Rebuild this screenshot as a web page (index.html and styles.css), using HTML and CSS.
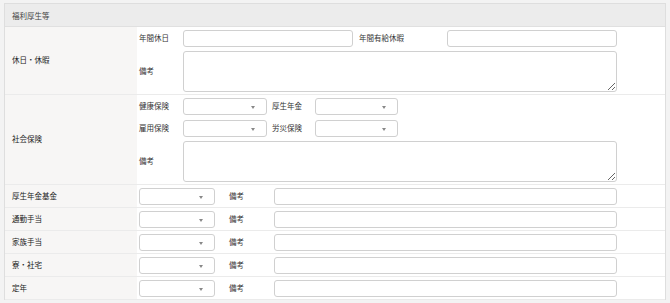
FILE: index.html
```html
<!DOCTYPE html>
<html lang="ja">
<head>
    <meta charset="UTF-8">
    <meta name="viewport" content="width=device-width, initial-scale=1.0">
    <title>福利厚生等</title>
    <link rel="stylesheet" href="styles.css">
</head>
<body>
    <div class="panel">
        <div class="panel-head">福利厚生等</div>

        <div class="row">
            <div class="row-label">休日・休暇</div>
            <div class="row-body">
                <div class="line">
                    <span class="fl">年間休日</span>
                    <input type="text" class="inp w170">
                    <span class="fl fl-wide">年間有給休暇</span>
                    <input type="text" class="inp w170">
                </div>
                <div class="line">
                    <span class="fl">備考</span>
                    <textarea class="memo"></textarea>
                </div>
            </div>
        </div>

        <div class="row">
            <div class="row-label">社会保険</div>
            <div class="row-body">
                <div class="line">
                    <span class="fl">健康保険</span>
                    <div class="sel w84"></div>
                    <span class="fl fl-mid">厚生年金</span>
                    <div class="sel w83"></div>
                </div>
                <div class="line gap5">
                    <span class="fl">雇用保険</span>
                    <div class="sel w84"></div>
                    <span class="fl fl-mid">労災保険</span>
                    <div class="sel w83"></div>
                </div>
                <div class="line">
                    <span class="fl">備考</span>
                    <textarea class="memo"></textarea>
                </div>
            </div>
        </div>

        <div class="row">
            <div class="row-label">厚生年金基金</div>
            <div class="row-body">
                <div class="line">
                    <div class="sel w76"></div>
                    <span class="fl fl-note">備考</span>
                    <input type="text" class="inp w343">
                </div>
            </div>
        </div>

        <div class="row">
            <div class="row-label">通勤手当</div>
            <div class="row-body">
                <div class="line">
                    <div class="sel w76"></div>
                    <span class="fl fl-note">備考</span>
                    <input type="text" class="inp w343">
                </div>
            </div>
        </div>

        <div class="row">
            <div class="row-label">家族手当</div>
            <div class="row-body">
                <div class="line">
                    <div class="sel w76"></div>
                    <span class="fl fl-note">備考</span>
                    <input type="text" class="inp w343">
                </div>
            </div>
        </div>

        <div class="row">
            <div class="row-label">寮・社宅</div>
            <div class="row-body">
                <div class="line">
                    <div class="sel w76"></div>
                    <span class="fl fl-note">備考</span>
                    <input type="text" class="inp w343">
                </div>
            </div>
        </div>

        <div class="row">
            <div class="row-label">定年</div>
            <div class="row-body">
                <div class="line">
                    <div class="sel w76"></div>
                    <span class="fl fl-note">備考</span>
                    <input type="text" class="inp w343">
                </div>
            </div>
        </div>
    </div>
</body>
</html>
```

FILE: styles.css
```css
*,
*::after,
*::before{
    padding: 0;
    margin: 0;
    box-sizing: border-box;
}
html{
    font: normal 7.5px/1.4 "Noto Sans CJK JP", "Noto Sans", sans-serif;
}
body{
    background-color: #f3f3f3;
    padding: 3px 4px 0 4px;
    color: #333;
}
.panel{
    background-color: #fff;
    border: 1px solid #dedede;
    border-bottom: none;
}
.panel-head{
    height: 23px;
    line-height: 23px;
    padding-left: 7px;
    background-color: #ececec;
    border-bottom: 1px solid #e0e0e0;
    color: #444;
}
.row{
    display: grid;
    grid-template-columns: 132px 1fr;
    border-bottom: 1px solid #ebebeb;
}
.row-label{
    background-color: #f7f6f5;
    padding-left: 7px;
    display: flex;
    align-items: center;
    color: #222;
}
.row-body{
    padding: 3px 0 2px 2px;
}
.line{
    display: flex;
    align-items: center;
}
.line + .line{
    margin-top: 4px;
}
.line.gap5{
    margin-top: 5px;
}
.fl{
    width: 44px;
    flex-shrink: 0;
    color: #333;
}
.fl-wide{
    width: 88px;
    margin-left: 6px;
}
.fl-mid{
    width: 43px;
    margin-left: 5px;
}
.fl-note{
    width: 45px;
    margin-left: 14px;
}
.inp{
    height: 17px;
    border: 1px solid #d0d0d0;
    border-radius: 3px;
    background-color: #fff;
    font: inherit;
}
.w170{ width: 170px; }
.w343{ width: 343px; }
.memo{
    width: 434px;
    height: 41px;
    border: 1px solid #d0d0d0;
    border-radius: 3px;
    font: inherit;
    display: block;
}
.sel{
    height: 17px;
    border: 1px solid #d0d0d0;
    border-radius: 3px;
    background-color: #fff;
    position: relative;
    flex-shrink: 0;
}
.sel::after{
    content: "";
    position: absolute;
    right: 11px;
    top: 7px;
    border-left: 2.5px solid transparent;
    border-right: 2.5px solid transparent;
    border-top: 3px solid #888;
}
.w84{ width: 84px; }
.w83{ width: 83px; }
.w76{ width: 76px; }
```
